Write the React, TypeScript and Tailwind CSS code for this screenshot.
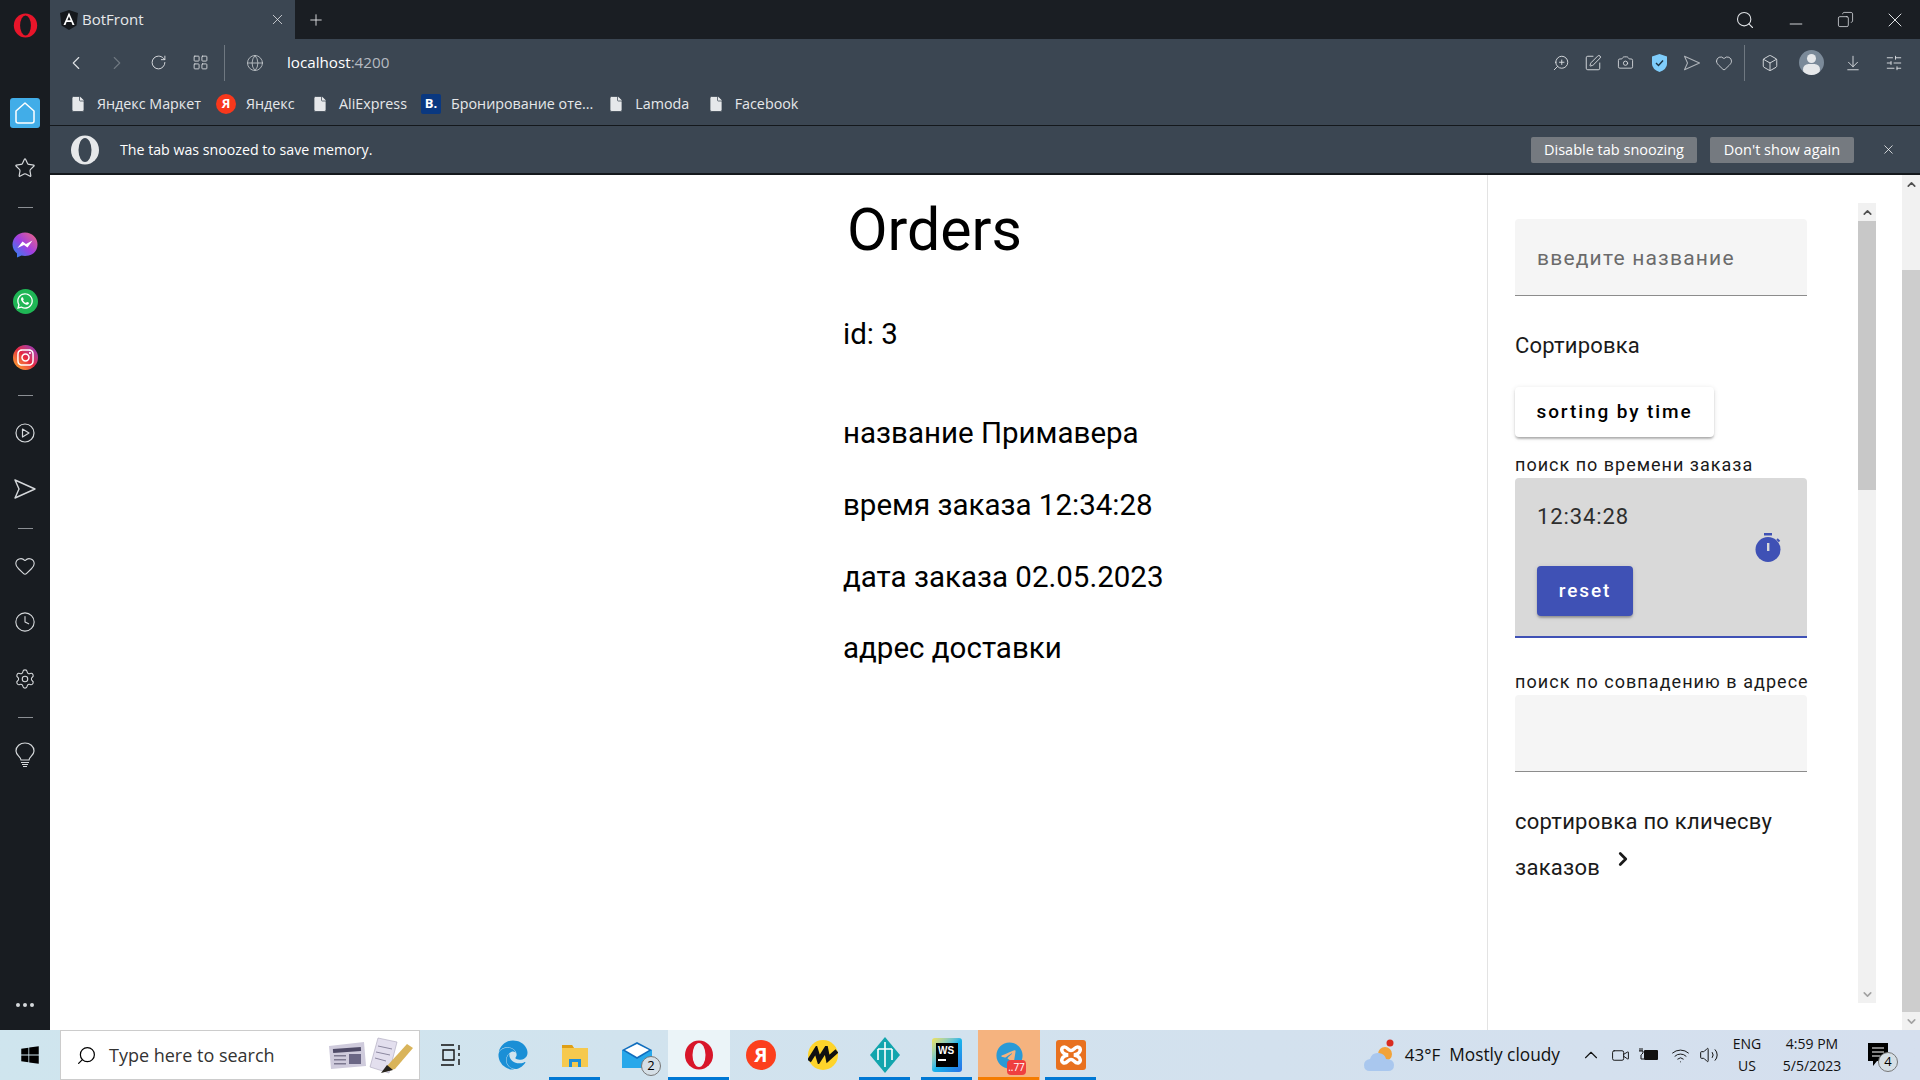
import {
  ArrowDownToLine,
  Box,
  Camera,
  ChevronDown,
  ChevronLeft,
  ChevronRight,
  ChevronUp,
  Clock,
  Copy,
  File,
  Globe,
  Heart,
  LayoutGrid,
  Minus,
  Plus,
  RotateCw,
  Search,
  Settings,
  SlidersHorizontal,
  Star,
  Video,
  Volume2,
  Wifi,
  X,
  ZoomIn,
  PenSquare,
} from "lucide-react";
import { FaWhatsapp, FaInstagram, FaWindows, FaEdge } from "react-icons/fa";
import { FaTelegram } from "react-icons/fa6";

function OperaMark({ size = 30, color = "#e8152a", inner = "#181c21" }: { size?: number; color?: string; inner?: string }) {
  return (
    <svg width={size} height={size} viewBox="0 0 30 30">
      <ellipse cx="15" cy="15" rx="14" ry="14.5" fill={color} />
      <ellipse cx="15" cy="15" rx="6.5" ry="12" fill={inner} />
    </svg>
  );
}

function SendOutline({ size = 24 }: { size?: number }) {
  return (
    <svg width={size} height={size} viewBox="0 0 24 24" fill="none" stroke="currentColor" strokeWidth="1.4" strokeLinejoin="round">
      <path d="M2 3 L22 12 L2 21 L6 12 Z" />
    </svg>
  );
}

function Divider() {
  return <div className="h-px w-[15px] bg-[#8b8f94]" />;
}

function Sidebar() {
  return (
    <aside className="flex w-[50px] shrink-0 flex-col items-center bg-[#181c21] text-[#d5d8db]">
      <div className="flex h-[50px] items-center">
        <OperaMark size={25} />
      </div>
      <div className="mt-[38px] flex h-[50px] items-center">
        <div className="flex h-[30px] w-[30px] items-center justify-center rounded-[3px] bg-[#41ade8]">
          <svg width="20" height="22" viewBox="0 0 20 22" fill="none" stroke="#fff" strokeWidth="1.5">
            <path d="M1 9 L10 1 L19 9 V19 Q19 21 17 21 H3 Q1 21 1 19 Z" strokeLinejoin="round" />
          </svg>
        </div>
      </div>
      <div className="flex h-[60px] items-center">
        <Star size={22} strokeWidth={1.3} />
      </div>
      <div className="flex h-[18px] items-center">
        <Divider />
      </div>
      <div className="flex h-[58px] items-center">
        <svg width="26" height="26" viewBox="0 0 26 26">
          <defs>
            <linearGradient id="messenger" x1="0" y1="1" x2="1" y2="0">
              <stop offset="0" stopColor="#1f8bf5" />
              <stop offset="0.5" stopColor="#a13ee0" />
              <stop offset="1" stopColor="#f2697b" />
            </linearGradient>
          </defs>
          <path d="M13 0.5 C20 0.5 25.5 5.5 25.5 12.5 C25.5 19.5 20 24 13 24 C11.5 24 10.5 23.8 9.5 23.5 L5 25.5 L5 21.5 C2.5 19.5 0.5 16.5 0.5 12.5 C0.5 5.5 6 0.5 13 0.5 Z" fill="url(#messenger)" />
          <path d="M5.5 16 L10.5 9.5 L14 12 L20.5 8.5 L15.5 15.5 L12 13 Z" fill="#fff" />
        </svg>
      </div>
      <div className="flex h-[54px] items-center">
        <div className="flex h-[25px] w-[25px] items-center justify-center rounded-full bg-[#1fb655]">
          <FaWhatsapp size={18} className="text-white" />
        </div>
      </div>
      <div className="flex h-[58px] items-center">
        <div className="flex h-[25px] w-[25px] items-center justify-center rounded-full bg-gradient-to-tr from-[#fdb11f] via-[#e6253f] to-[#8e26c9]">
          <FaInstagram size={19} className="text-white" />
        </div>
      </div>
      <div className="flex h-[18px] items-center">
        <Divider />
      </div>
      <div className="flex h-[58px] items-center">
        <svg width="20" height="20" viewBox="0 0 20 20" fill="none" stroke="currentColor" strokeWidth="1.2">
          <circle cx="10" cy="10" r="9" />
          <path d="M7.5 6 L14 10 L7.5 14 Z" strokeLinejoin="round" />
        </svg>
      </div>
      <div className="flex h-[54px] items-center">
        <SendOutline />
      </div>
      <div className="flex h-[24px] items-center">
        <Divider />
      </div>
      <div className="flex h-[52px] items-center">
        <Heart size={22} strokeWidth={1.2} />
      </div>
      <div className="flex h-[60px] items-center">
        <Clock size={22} strokeWidth={1.2} />
      </div>
      <div className="flex h-[54px] items-center">
        <Settings size={22} strokeWidth={1.2} />
      </div>
      <div className="flex h-[24px] items-center pb-[2px]">
        <Divider />
      </div>
      <div className="flex h-[50px] items-center">
        <svg width="20" height="26" viewBox="0 0 20 26" fill="none" stroke="currentColor" strokeWidth="1.2">
          <path d="M6 18 C6 15 1 13.5 1 9 C1 4.5 5 1 10 1 C15 1 19 4.5 19 9 C19 13.5 14 15 14 18 Z" />
          <path d="M6 20.5 H14 M7 22.5 H13 M8 24.5 H12" />
        </svg>
      </div>
      <div className="mt-auto flex h-[50px] items-center gap-[3px]">
        <span className="h-[4px] w-[4px] rounded-full bg-[#d5d8db]" />
        <span className="h-[4px] w-[4px] rounded-full bg-[#d5d8db]" />
        <span className="h-[4px] w-[4px] rounded-full bg-[#d5d8db]" />
      </div>
    </aside>
  );
}

function TabBar() {
  return (
    <div className="flex h-[39px] items-center bg-[#1a1e23] text-[#e6e8ea]">
      <div className="flex h-full w-[245px] items-center bg-[#3b4652] pl-[10px] pr-[9px]">
        <svg width="18" height="20" viewBox="0 0 18 20">
          <path d="M9 0 L18 3 L16.5 15.5 L9 20 L1.5 15.5 L0 3 Z" fill="#15181c" />
          <path d="M9 2.5 L3.5 15 H5.5 L6.6 12 H11.4 L12.5 15 H14.5 Z M7.4 10.3 L9 6.2 L10.6 10.3 Z" fill="#fff" />
        </svg>
        <span className="ml-[4px] flex-1 text-[15px]">BotFront</span>
        <X size={17} strokeWidth={1.1} />
      </div>
      <Plus size={18} strokeWidth={1.2} className="ml-[12px]" />
      <div className="ml-auto flex items-center text-[#dfe2e5]">
        <Search size={20} strokeWidth={1.3} />
        <Minus size={20} strokeWidth={1.1} className="ml-[31px] mt-[9px]" />
        <Copy size={17} strokeWidth={1.1} className="ml-[31px] -scale-x-100" />
        <X size={24} strokeWidth={1} className="ml-[29px] mr-[13px]" />
      </div>
    </div>
  );
}

function AddressBar() {
  return (
    <div className="flex h-[47px] items-center bg-[#3b4652] text-[#dfe2e5]">
      <ChevronLeft size={22} strokeWidth={1.2} className="ml-[15px]" />
      <ChevronRight size={22} strokeWidth={1.2} className="ml-[19px] text-[#6f7881]" />
      <RotateCw size={17} strokeWidth={1.3} className="ml-[22px]" />
      <LayoutGrid size={17} strokeWidth={1.2} className="ml-[25px]" />
      <div className="ml-[15px] h-[36px] w-px bg-[#6f7881]" />
      <Globe size={18} strokeWidth={1.1} className="ml-[21px] text-[#c5c9cd]" />
      <span className="ml-[23px] text-[15.2px] text-white">
        localhost<span className="text-[#b6bbc1]">:4200</span>
      </span>
      <div className="ml-auto flex items-center">
        <ZoomIn size={18} strokeWidth={1.2} className="-scale-x-100" />
        <PenSquare size={18} strokeWidth={1.2} className="ml-[14px]" />
        <Camera size={17} strokeWidth={1.2} className="ml-[15px]" />
        <svg className="ml-[18px]" width="15" height="18" viewBox="0 0 15 18">
          <path d="M7.5 0 L15 2.5 V10 Q15 15 7.5 18 Q0 15 0 10 V2.5 Z" fill="#7fcdfb" />
          <path d="M4 9 L6.5 11.5 L11 6.5" fill="none" stroke="#1e3344" strokeWidth="1.4" />
        </svg>
        <span className="ml-[16px] text-[#aeb3b9]">
          <SendOutline size={18} />
        </span>
        <Heart size={18} strokeWidth={1.1} className="ml-[14px]" />
        <div className="ml-[11px] h-[36px] w-px bg-[#6f7881]" />
        <Box size={18} strokeWidth={1.2} className="ml-[16px]" />
        <div className="ml-[20px] flex h-[25px] w-[25px] flex-col items-center overflow-hidden rounded-full bg-[#7b8a99] pt-[4px]">
          <span className="h-[9px] w-[9px] rounded-full bg-[#e6e8ea]" />
          <span className="mt-[1px] h-[12px] w-[17px] rounded-full bg-[#e6e8ea]" />
        </div>
        <ArrowDownToLine size={18} strokeWidth={1.2} className="ml-[20px]" />
        <SlidersHorizontal size={18} strokeWidth={1.2} className="ml-[23px] mr-[17px]" />
      </div>
    </div>
  );
}

const bookmarks = [
  { label: "Яндекс Маркет", kind: "doc", gap: "flex items-center gap-[10px]" },
  { label: "Яндекс", kind: "ya", gap: "ml-[15px] flex items-center gap-[10px]" },
  { label: "AliExpress", kind: "doc", gap: "ml-[16.5px] flex items-center gap-[10px]" },
  { label: "Бронирование оте...", kind: "b", gap: "ml-[14px] flex items-center gap-[10px]" },
  { label: "Lamoda", kind: "doc", gap: "ml-[14px] flex items-center gap-[10px]" },
  { label: "Facebook", kind: "doc", gap: "ml-[17.5px] flex items-center gap-[10px]" },
];

function BookmarkIcon({ kind }: { kind: string }) {
  if (kind === "ya") {
    return (
      <span className="flex h-[20px] w-[20px] items-center justify-center rounded-full bg-[#f8381c] text-[13px] font-bold text-white">
        Я
      </span>
    );
  }
  if (kind === "b") {
    return (
      <span className="flex h-[20px] w-[20px] items-center justify-center rounded-[2px] bg-[#0a3880] text-[13px] font-bold text-white">
        B.
      </span>
    );
  }
  return <File size={18} fill="#e6e8ea" strokeWidth={1} className="text-[#3b4652]" />;
}

function BookmarkBar() {
  return (
    <div className="flex h-[40px] items-center border-b border-[#14181c] bg-[#3b4652] pb-[4px] pl-[19px] text-[14.3px] text-[#e6e8ea]">
      {bookmarks.map((b) => (
        <div key={b.label} className={b.gap}>
          <BookmarkIcon kind={b.kind} />
          <span>{b.label}</span>
        </div>
      ))}
    </div>
  );
}

function SnoozeBar() {
  return (
    <div className="flex h-[49px] items-center border-b-2 border-[#14181c] bg-[#3b4652] pl-[20px] pr-[24px] text-white">
      <div className="w-[30px]">
        <OperaMark size={30} color="#e6e8ea" inner="#3b4652" />
      </div>
      <span className="ml-[20px] text-[14.2px]">The tab was snoozed to save memory.</span>
      <div className="ml-auto flex items-center">
        <button className="h-[26px] w-[166px] rounded-[2px] bg-[#757a80] text-[14.5px]">Disable tab snoozing</button>
        <button className="ml-[13px] h-[26px] w-[144px] rounded-[2px] bg-[#757a80] text-[14.5px]">Don't show again</button>
        <X size={15} strokeWidth={1.2} className="ml-[27px]" />
      </div>
    </div>
  );
}

function Scrollbar({ thumbTop, thumbBottom }: { thumbTop: string; thumbBottom: string }) {
  return (
    <div className="flex h-full w-[18px] flex-col items-center bg-[#f1f1f1]">
      <div className="flex h-[18px] items-center">
        <ChevronUp size={13} strokeWidth={3} className="text-[#505050]" />
      </div>
      <div className={thumbTop} />
      <div className={thumbBottom} />
      <div className="flex h-[18px] items-center">
        <ChevronDown size={13} strokeWidth={3} className="text-[#a3a3a3]" />
      </div>
    </div>
  );
}

function OrderDetails() {
  return (
    <main className="flex-1 pl-[793px] text-black">
      <h1 className="ml-[4px] mt-[19px] text-[59px] leading-[72px]">Orders</h1>
      <p className="mt-[47px] text-[29.5px] leading-[42px]">id: 3</p>
      <p className="mt-[57px] text-[29.5px] leading-[42px]">название Примавера</p>
      <p className="mt-[30px] text-[29.5px] leading-[42px]">время заказа 12:34:28</p>
      <p className="mt-[29.5px] text-[29.5px] leading-[42px]">дата заказа 02.05.2023</p>
      <p className="mt-[29.5px] text-[29.5px] leading-[42px]">адрес доставки</p>
    </main>
  );
}

function Filters() {
  return (
    <aside className="flex w-[433px] shrink-0 border-l border-[#e3e3e3]">
      <div className="w-[369px] pl-[27px] pt-[44px]">
        <div className="flex h-[77px] w-[292px] items-center rounded-t-[4px] border-b border-[#8c8c8c] bg-[#f5f5f5] pl-[22px] pt-[4px] text-[21px] tracking-[1.2px] text-[#6b6b6b]">
          введите название
        </div>
        <p className="mt-[34px] text-[22px] leading-[32px] tracking-[0.2px] text-[#1a1a1a]">Сортировка</p>
        <button className="mt-[25px] block h-[50px] w-[199px] rounded-[4px] bg-white text-[19px] font-medium tracking-[1.9px] text-black shadow-[0_3px_3px_-2px_rgba(0,0,0,.2),0_2px_2px_0_rgba(0,0,0,.14),0_1px_5px_0_rgba(0,0,0,.12)]">
          sorting by time
        </button>
        <p className="mt-[15px] text-[18px] leading-[26px] tracking-[1px] text-[#1a1a1a]">поиск по времени заказа</p>
        <div className="h-[160px] w-[292px] rounded-t-[4px] border-b-2 border-[#3f51b5] bg-[#d9d9d9] pl-[22px]">
          <div className="flex items-start justify-between pr-[26px]">
            <span className="mt-[23px] text-[22px] leading-[32px] tracking-[0.9px] text-[#2e2e2e]">12:34:28</span>
            <svg className="mt-[55px]" width="26" height="30" viewBox="0 0 26 30">
              <rect x="9" y="0" width="8" height="2.5" fill="#3f51b5" />
              <circle cx="13" cy="16.5" r="12.5" fill="#3f51b5" />
              <path d="M22 6 L24.5 8.5" stroke="#3f51b5" strokeWidth="2" />
              <rect x="12" y="10" width="2.4" height="8" fill="#d9d9d9" />
            </svg>
          </div>
          <button className="mt-[3px] block h-[50px] w-[96px] rounded-[4px] bg-[#3f51b5] text-[19px] font-medium tracking-[1.9px] text-white shadow-[0_3px_3px_-2px_rgba(0,0,0,.2),0_2px_2px_0_rgba(0,0,0,.14),0_1px_5px_0_rgba(0,0,0,.12)]">
            reset
          </button>
        </div>
        <p className="mt-[31px] text-[18px] leading-[26px] tracking-[1.05px] text-[#1a1a1a]">поиск по совпадению в адресе</p>
        <div className="h-[77px] w-[292px] rounded-t-[4px] border-b border-[#8c8c8c] bg-[#f5f5f5]" />
        <p className="mt-[27px] text-[22px] leading-[46px] tracking-[0.25px] text-[#1a1a1a]">сортировка по кличесву</p>
        <div className="flex items-start">
          <span className="text-[22px] leading-[46px] tracking-[0.25px] text-[#1a1a1a]">заказов</span>
          <ChevronRight size={22} strokeWidth={3} className="ml-[12px] mt-[3px] text-[#1a1a1a]" />
        </div>
      </div>
      <div className="ml-[1px] mt-[28px] h-[800px]">
        <Scrollbar thumbTop="h-[269px] w-full bg-[#c8c8c8]" thumbBottom="w-full flex-1" />
      </div>
      <div className="ml-auto h-full">
        <Scrollbar thumbTop="h-[77px] w-full" thumbBottom="w-full flex-1 bg-[#cdcdcd]" />
      </div>
    </aside>
  );
}

function TaskSlot({ children, line, bg }: { children: React.ReactNode; line?: string; bg?: string }) {
  return (
    <div className={`relative flex h-full w-[62px] items-center justify-center ${bg ?? ""}`}>
      {children}
      {line && <div className={line} />}
    </div>
  );
}

function Badge({ n, className }: { n: string; className: string }) {
  return (
    <span className={`absolute flex h-[20px] w-[20px] items-center justify-center rounded-full border border-[#777] bg-[#d5dfe6] text-[13px] text-black ${className}`}>
      {n}
    </span>
  );
}

function Taskbar() {
  return (
    <footer className="flex h-[50px] shrink-0 items-center bg-gradient-to-r from-[#cfe5ee] to-[#d5dfee] font-['Open_Sans',sans-serif] text-black">
      <div className="flex w-[60px] justify-center">
        <FaWindows size={20} />
      </div>
      <div className="flex h-full w-[360px] items-center border border-[#cccccc] bg-white pl-[15px]">
        <Search size={21} strokeWidth={1.4} className="-scale-x-100" />
        <span className="ml-[12px] text-[18px] text-[#333]">Type here to search</span>
        <div className="ml-auto mr-[6px] flex items-center gap-[3px]">
          <svg width="38" height="30" viewBox="0 0 38 30">
            <path d="M1 6 L36 2 L38 26 L3 29 Z" fill="#cfcbdc" />
            <rect x="5" y="8" width="28" height="4" fill="#4e4a66" transform="rotate(-4 19 10)" />
            <rect x="6" y="15" width="12" height="1.5" fill="#7d7990" />
            <rect x="6" y="19" width="12" height="1.5" fill="#7d7990" />
            <rect x="6" y="23" width="12" height="1.5" fill="#7d7990" />
            <rect x="21" y="14" width="12" height="10" fill="#6b6785" />
          </svg>
          <svg width="44" height="38" viewBox="0 0 44 38">
            <path d="M9 2 L28 6 L20 37 L1 31 Z" fill="#e3dfee" stroke="#a9a5bb" strokeWidth="0.6" />
            <path d="M9 10 L23 13 M7 16 L21 19 M6 22 L17 25" stroke="#8c88a0" strokeWidth="1" />
            <path d="M18 30 L38 8 L44 12 L26 33 L14 36 Z" fill="#d9b45a" />
            <path d="M12 37 L18 29 L24 34 Z" fill="#26221c" />
          </svg>
        </div>
      </div>
      <TaskSlot>
        <svg width="22" height="22" viewBox="0 0 22 22" fill="none" stroke="#111" strokeWidth="1.4">
          <path d="M1 1 H14 M1 21 H14 M3 6 H14 V16 H3 Z M19 1 V6 M19 9 V12 M19 15 V21" />
        </svg>
      </TaskSlot>
      <TaskSlot>
        <FaEdge size={30} className="text-[#1a8fd6]" />
      </TaskSlot>
      <TaskSlot line="absolute bottom-0 left-[5px] h-[3px] w-[51px] bg-[#0078d4]">
        <svg width="28" height="28" viewBox="0 0 28 28">
          <path d="M1 4 H11 L13 7 H27 V26 H1 Z" fill="#f6c94e" />
          <path d="M1 4 H11 L13 7 H1 Z" fill="#df9f16" />
          <rect x="8" y="18" width="12" height="8" fill="#1f8fd8" />
          <rect x="11" y="21" width="6" height="5" fill="#f6c94e" />
        </svg>
      </TaskSlot>
      <TaskSlot>
        <svg width="30" height="26" viewBox="0 0 30 26">
          <path d="M0 8 L15 0 L30 8 V26 H0 Z" fill="#106ebe" />
          <path d="M0 8 L15 17 L30 8 V26 H0 Z" fill="#28a8ea" />
          <path d="M3 8 L15 2 L27 8 L15 15 Z" fill="#fff" />
        </svg>
        <Badge n="2" className="bottom-[4px] right-[7px]" />
      </TaskSlot>
      <TaskSlot bg="bg-[#ebf4f8]" line="absolute bottom-0 left-0 h-[3px] w-[61px] bg-[#0078d4]">
        <OperaMark size={30} color="#d8162a" inner="#ebf4f8" />
      </TaskSlot>
      <TaskSlot>
        <span className="flex h-[30px] w-[30px] items-center justify-center rounded-full bg-[#fc3f1d] text-[20px] font-bold text-white">Я</span>
      </TaskSlot>
      <TaskSlot>
        <span className="flex h-[30px] w-[30px] items-center justify-center rounded-full bg-[#fed42b]">
          <svg width="30" height="18" viewBox="0 0 30 18" fill="none" stroke="#111" strokeWidth="4.5">
            <path d="M1 15 L8 4 L11 14 L18 3 L20 13 L29 5" />
          </svg>
        </span>
      </TaskSlot>
      <TaskSlot line="absolute bottom-0 left-[5px] h-[3px] w-[51px] bg-[#0078d4]">
        <svg width="30" height="36" viewBox="0 0 30 36">
          <path d="M15 0 L30 18 L15 36 L0 18 Z" fill="#12a5ad" />
          <path d="M15 5 V30 M8 12 V23 M22 12 V23 M8 12 H22" stroke="#fff" strokeWidth="1.6" fill="none" />
        </svg>
      </TaskSlot>
      <TaskSlot line="absolute bottom-0 left-[5px] h-[3px] w-[51px] bg-[#0078d4]">
        <div className="flex h-[34px] w-[30px] items-center justify-center rounded-[3px] bg-gradient-to-br from-[#f2e24a] via-[#19b5ea] to-[#2a6fe8]">
          <div className="flex h-[24px] w-[22px] flex-col bg-black px-[2px] pt-[2px] font-['Liberation_Sans',sans-serif] text-[10px] font-bold leading-[11px] text-white">
            WS
            <span className="mt-[3px] h-[1.5px] w-[8px] bg-white" />
          </div>
        </div>
      </TaskSlot>
      <TaskSlot bg="bg-[#f5b37f]" line="absolute bottom-0 left-0 h-[3px] w-[61px] bg-[#f57c00]">
        <FaTelegram size={27} className="text-[#2a9ad6]" />
        <span className="absolute bottom-[5px] right-[14px] flex h-[15px] w-[19px] items-center justify-center rounded-[4px] bg-[#ef3f3f] text-[10px] text-white">
          ..77
        </span>
      </TaskSlot>
      <TaskSlot line="absolute bottom-0 left-[5px] h-[3px] w-[51px] bg-[#0078d4]">
        <div className="flex h-[30px] w-[30px] items-center justify-center rounded-[3px] bg-[#e8711f]">
          <svg width="22" height="20" viewBox="0 0 22 20" fill="none" stroke="#fff" strokeWidth="3.5">
            <path d="M8 4 C4 0 1 3 2 6 C3 9 8 10 8 10 C8 10 3 11 2 14 C1 17 4 20 8 16 C10 14 12 14 14 16 C18 20 21 17 20 14 C19 11 14 10 14 10 C14 10 19 9 20 6 C21 3 18 0 14 4 C12 6 10 6 8 4 Z" />
          </svg>
        </div>
      </TaskSlot>
      <div className="ml-auto flex items-center pr-[30px] text-[#111]">
        <svg width="30" height="36" viewBox="0 0 30 36">
          <circle cx="21" cy="17" r="7" fill="#f2a33a" />
          <circle cx="26" cy="6" r="3.5" fill="#d92c20" />
          <path d="M6 34 Q0 34 0 28 Q0 23 6 22 Q8 15 15 16 Q21 17 22 22 Q30 22 30 28 Q30 34 24 34 Z" fill="#a9c7ee" />
        </svg>
        <span className="ml-[11px] text-[17px]">43°F</span>
        <span className="ml-[9px] text-[17.3px]">Mostly cloudy</span>
        <ChevronUp size={22} strokeWidth={1.2} className="ml-[20px]" />
        <Video size={19} strokeWidth={1.2} className="ml-[9px]" />
        <svg className="ml-[9px]" width="20" height="14" viewBox="0 0 20 14">
          <path d="M1 0 V3 M3 0 V3 M0 3 H4 V5 Q2 7 2 7 V11 H5" fill="none" stroke="#111" strokeWidth="1" />
          <rect x="5" y="2" width="14" height="10" rx="1" fill="#111" />
        </svg>
        <Wifi size={19} strokeWidth={1.2} className="ml-[12px]" />
        <Volume2 size={20} strokeWidth={1.2} className="ml-[9px]" />
        <div className="ml-[13px] flex w-[30px] flex-col items-center text-[14px] leading-[22px]">
          <span>ENG</span>
          <span>US</span>
        </div>
        <div className="ml-[15px] flex w-[70px] flex-col items-center text-[14px] leading-[22px]">
          <span>4:59 PM</span>
          <span>5/5/2023</span>
        </div>
        <div className="relative ml-[21px] mr-[2px]">
          <svg width="20" height="24" viewBox="0 0 20 24">
            <path d="M0 0 H20 V18 H9 L5 23 V18 H0 Z" fill="#000" />
            <path d="M4 5 H16 M4 9 H16 M4 13 H12" stroke="#fff" strokeWidth="1.2" />
          </svg>
          <Badge n="4" className="-bottom-[5px] -right-[10px]" />
        </div>
      </div>
    </footer>
  );
}

export default function App() {
  return (
    <div className="flex h-[1080px] w-[1920px] flex-col overflow-hidden bg-white font-['Open_Sans',sans-serif]">
      <div className="flex min-h-0 flex-1">
        <Sidebar />
        <div className="flex min-w-0 flex-1 flex-col">
          <TabBar />
          <AddressBar />
          <BookmarkBar />
          <SnoozeBar />
          <div className="flex min-h-0 flex-1 font-['Roboto',sans-serif]">
            <OrderDetails />
            <Filters />
          </div>
        </div>
      </div>
      <Taskbar />
    </div>
  );
}
